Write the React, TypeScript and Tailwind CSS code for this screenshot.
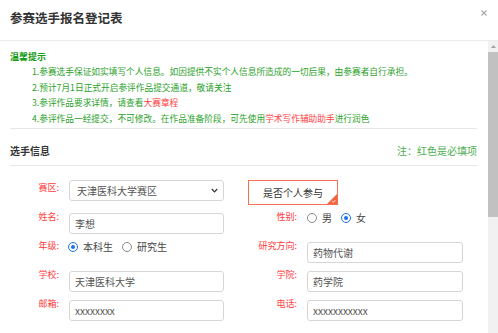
import { ReactNode } from 'react';

function Label({ children, width }: { children: ReactNode; width: string }) {
    return (
        <span className={`${width} shrink-0 text-right text-[9px] leading-[15px] text-[#ff3b3b]`}>{children}</span>
    );
}

function Field({ value }: { value: string }) {
    return (
        <input
            readOnly
            value={value}
            className="h-[21px] w-full rounded-[3px] border border-[#d6d6d6] bg-white px-[5px] text-[10px] text-[#555] outline-none"
        />
    );
}

function Radio({ label, checked }: { label: string; checked?: boolean }) {
    return (
        <span className="flex items-start gap-[5px]">
            {checked ? (
                <span className="mt-[4px] flex h-[10px] w-[10px] items-center justify-center rounded-full border-[1.5px] border-[#1a73e8]">
                    <span className="h-[4px] w-[4px] rounded-full bg-[#1a73e8]" />
                </span>
            ) : (
                <span className="mt-[4px] h-[10px] w-[10px] rounded-full border border-[#8a8a8a]" />
            )}
            <span className="text-[10px] leading-[18px] text-[#444]">{label}</span>
        </span>
    );
}

export default function App() {
    return (
        <div className="flex h-[333px] w-[498px] flex-col overflow-hidden bg-white font-['Noto_Sans_CJK_SC',sans-serif]">
            {/* header */}
            <div className="flex h-[41px] shrink-0 items-start justify-between border-b border-[#ececec] pl-[10px] pr-[11px]">
                <h1 className="pt-[9px] text-[12.5px] font-bold leading-[18px] text-[#333]">参赛选手报名登记表</h1>
                <svg className="mt-[10px]" width="6" height="6" viewBox="0 0 6 6">
                    <path d="M0.5 0.5 L5.5 5.5 M5.5 0.5 L0.5 5.5" stroke="#a8a8a8" strokeWidth="1.1" />
                </svg>
            </div>

            <div className="flex flex-1">
                <div className="flex-1 pl-[10px] pr-[11px]">
                    {/* tips */}
                    <div className="pt-[8px]">
                        <div className="text-[9px] font-bold leading-[15px] text-[#169b16]">温馨提示</div>
                        <div className="pl-[22px] text-[8.7px] leading-[15.7px] text-[#2a9f2a]">
                            <p>1.参赛选手保证如实填写个人信息。如因提供不实个人信息所造成的一切后果，由参赛者自行承担。</p>
                            <p>2.预计7月1日正式开启参评作品提交通道，敬请关注</p>
                            <p>
                                3.参评作品要求详情，请查看<span className="text-[#ff4040]">大赛章程</span>
                            </p>
                            <p>
                                4.参评作品一经提交，不可修改。在作品准备阶段，可先使用
                                <span className="text-[#ff4040]">学术写作辅助助手</span>进行润色
                            </p>
                        </div>
                    </div>
                    <div className="mt-[1px] border-t border-[#e6e6e6]" />

                    {/* section title */}
                    <div className="flex items-center justify-between pb-[6px] pt-[14px] leading-[16px]">
                        <span className="text-[10px] font-bold text-[#333]">选手信息</span>
                        <span className="text-[10px] text-[#4caf50]">注：红色是必填项</span>
                    </div>
                    <div className="border-t border-[#e6e6e6]" />

                    {/* form */}
                    <div className="flex flex-col gap-[8px] pt-[14px]">
                        <div className="flex h-[21px]">
                            <div className="flex w-[229px] items-start">
                                <Label width="w-[49px]">赛区:</Label>
                                <div className="ml-[10px] flex h-[21px] w-[155px] items-center justify-between rounded-[3px] border border-[#d6d6d6] pl-[7px] pr-[5px] text-[10px] text-[#555]">
                                    <span>天津医科大学赛区</span>
                                    <svg width="7" height="5" viewBox="0 0 7 5">
                                        <path d="M0.8 1 L3.5 3.8 L6.2 1" fill="none" stroke="#333" strokeWidth="1.2" />
                                    </svg>
                                </div>
                            </div>
                            <div className="flex items-start">
                                <div className="relative ml-[9px] flex h-[25px] w-[90px] items-center justify-center border border-[#f3714f] bg-white text-[10px] text-[#333]">
                                    是否个人参与
                                    <svg className="absolute bottom-0 right-0" width="10" height="10" viewBox="0 0 10 10">
                                        <polygon points="10,0 10,10 0,10" fill="#f3643f" />
                                        <path d="M5.2 7.2 L6.4 8.3 L8.3 6.2" fill="none" stroke="#fff" strokeWidth="0.9" />
                                    </svg>
                                </div>
                            </div>
                        </div>

                        <div className="flex h-[21px]">
                            <div className="flex w-[229px] items-start">
                                <Label width="w-[49px]">姓名:</Label>
                                <div className="ml-[10px] w-[155px]">
                                    <Field value="李想" />
                                </div>
                            </div>
                            <div className="flex items-start">
                                <Label width="w-[58px]">性别:</Label>
                                <div className="ml-[10px] flex gap-[9px]">
                                    <Radio label="男" />
                                    <Radio label="女" checked />
                                </div>
                            </div>
                        </div>

                        <div className="flex h-[21px]">
                            <div className="flex w-[229px] items-start">
                                <Label width="w-[49px]">年级:</Label>
                                <div className="ml-[9px] flex gap-[9px]">
                                    <Radio label="本科生" checked />
                                    <Radio label="研究生" />
                                </div>
                            </div>
                            <div className="flex items-start">
                                <Label width="w-[58px]">研究方向:</Label>
                                <div className="ml-[10px] w-[156px]">
                                    <Field value="药物代谢" />
                                </div>
                            </div>
                        </div>

                        <div className="flex h-[21px]">
                            <div className="flex w-[229px] items-start">
                                <Label width="w-[49px]">学校:</Label>
                                <div className="ml-[10px] w-[155px]">
                                    <Field value="天津医科大学" />
                                </div>
                            </div>
                            <div className="flex items-start">
                                <Label width="w-[58px]">学院:</Label>
                                <div className="ml-[10px] w-[156px]">
                                    <Field value="药学院" />
                                </div>
                            </div>
                        </div>

                        <div className="flex h-[21px]">
                            <div className="flex w-[229px] items-start">
                                <Label width="w-[49px]">邮箱:</Label>
                                <div className="ml-[10px] w-[155px]">
                                    <Field value="xxxxxxxx" />
                                </div>
                            </div>
                            <div className="flex items-start">
                                <Label width="w-[58px]">电话:</Label>
                                <div className="ml-[10px] w-[156px]">
                                    <Field value="xxxxxxxxxxx" />
                                </div>
                            </div>
                        </div>
                    </div>
                </div>

                {/* scrollbar */}
                <div className="flex w-[10px] shrink-0 flex-col bg-[#f1f1f1]">
                    <div className="flex h-[11px] items-center justify-center">
                        <svg width="5" height="3" viewBox="0 0 5 3">
                            <polygon points="2.5,0 5,3 0,3" fill="#a3a3a3" />
                        </svg>
                    </div>
                    <div className="h-[165px] bg-[#c1c1c1]" />
                </div>
            </div>
        </div>
    );
}
